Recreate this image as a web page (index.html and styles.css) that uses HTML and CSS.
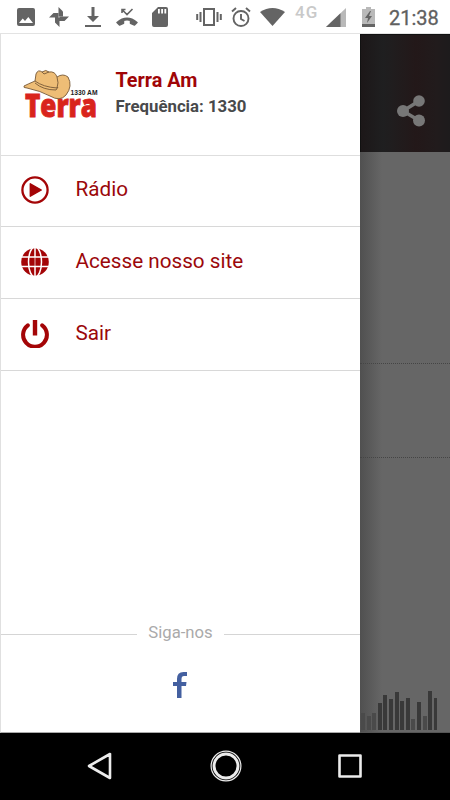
FILE: index.html
```html
<!DOCTYPE html>
<html lang="pt-BR">
<head>
<meta charset="utf-8">
<meta name="viewport" content="width=device-width, initial-scale=1">
<title>Terra Am</title>
<link rel="stylesheet" href="styles.css">
</head>
<body>
<div class="phone">
  <header class="status">
    <svg class="st-image" width="18" height="18" viewBox="0 0 18 18"><path fill-rule="evenodd" d="M2 0h14q2 0 2 2v14q0 2-2 2H2q-2 0-2-2V2q0-2 2-2zM2 15h14l-4.700-6-3.300 4-2.300-2.500z"/></svg>
    <svg class="st-fan" width="20" height="20" viewBox="0 0 20 20"><path d="M9.500 9.500V0L14 4.500V9.500z"/><path d="M10.500 9.500H20L15.500 14h-5zM10.500 10.500V20L6 15.500v-5zM9.500 10.500H0L4.500 6h5z"/></svg>
    <svg class="st-down" width="16" height="20" viewBox="0 0 16 20"><path d="M6.500 0h3v9H14l-6 6-6-6h4.500zM0 18h16v2H0z"/></svg>
    <svg class="st-missed" width="22" height="18" viewBox="0 0 22 18"><path d="M1 14.500Q11 6 21 14.500l-2.500 2.500-4-1.800v-2.800q-3.500-1.200-7 0v2.800l-4 1.800z" stroke="#646464" stroke-width="1.500" stroke-linejoin="round"/><path class="line" d="M6 5V1.500h3.500M6 1.500l5 5L16.500 1" stroke-width="1.600"/></svg>
    <svg class="st-sd" width="16" height="20" viewBox="0 0 16 20"><path fill-rule="evenodd" d="M6 0h8q2 0 2 2v16q0 2-2 2H2q-2 0-2-2V6zM6 2v4.500h1.800V2zM9.200 2v4.500h1.800V2zM12.400 2v4.500h1.800V2z"/></svg>
    <svg class="st-vibrate" width="26" height="18" viewBox="0 0 26 18"><path class="line" d="M8 1h10v16H8zM4.500 4v10M1.200 6v6M21.500 4v10M24.800 6v6" stroke-width="2"/></svg>
    <svg class="st-alarm" width="20" height="20" viewBox="0 0 20 20"><g class="line" stroke-width="1.900"><circle cx="10" cy="11.500" r="7.500"/><path d="M10 7v5l3.500 2M1 4.500L5 1M19 4.500L15 1"/></g></svg>
    <svg class="st-wifi" width="25" height="18" viewBox="0 0 25 18"><path d="M0 4Q12.500-4 25 4L12.500 18z"/></svg>
    <span class="network">4G</span>
    <svg class="st-signal" width="20" height="19" viewBox="0 0 20 19"><path d="M0 19L20 0v19z" fill="#b9b9b9"/><path d="M0 19L14.500 5.200V19z"/></svg>
    <svg class="st-battery" width="13" height="20" viewBox="0 0 13 20"><path d="M4 0h5v2h4v18H0V2h4z" fill="#b9b9b9"/><path d="M0 17h13v3H0zM8 4L3 11h3l-1 5 5-7H7l2-5z"/></svg>
    <time>21:38</time>
  </header>

  <main class="screen">
    <aside class="drawer">
      <section class="station">
        <svg class="logo" width="76" height="50" viewBox="0 0 76 50" role="img" aria-label="Terra 1330 AM">
          <text class="brand" x="2" y="48" textLength="72" lengthAdjust="spacingAndGlyphs">Terra</text>
          <path d="M1 17Q5 15 12 12L13 5Q15 0 19 3Q23 0 26 3Q32 2 34 8Q40 4 45 8Q50 17 43 26Q37 33 27 27Q18 22 4 19Q0 19 1 17z" fill="#eebd76" stroke="#765837" stroke-width=".9"/>
          <path d="M12 12Q20 18 34 19Q36 14 34 8M12 14Q20 21 33 21L35 18M19 3L21 5L26 3" fill="none" stroke="#765837" stroke-width=".9"/>
          <text class="small" x="47.500" y="26" textLength="27" lengthAdjust="spacingAndGlyphs">1330 AM</text>
        </svg>
        <div class="details"><h1>Terra Am</h1><p>Frequência: 1330</p></div>
      </section>
      <nav class="menu">
        <a class="item"><svg width="28" height="28" viewBox="0 0 28 28"><circle cx="14" cy="14" r="12.600" fill="none" stroke="#a40507" stroke-width="2.300"/><path d="M9.300 7.800L20.300 14 9.300 20.200z" stroke="#a40507" stroke-width="1.400" stroke-linejoin="round"/></svg><span>Rádio</span></a>
        <a class="item"><svg width="28" height="28" viewBox="0 0 28 28"><circle cx="14" cy="14" r="13.800"/><g fill="none" stroke="#fff" stroke-width="1.500"><path d="M0 9h28M0 18.600h28M14 0v9"/><path d="M14 18.600V28"/><ellipse cx="14" cy="14" rx="6.500" ry="15"/></g><path d="M14 9v9.600" stroke="#fff" stroke-width=".7"/></svg><span>Acesse nosso site</span></a>
        <a class="item"><svg width="28" height="28" viewBox="0 0 28 28" fill="none" stroke="#a40507" stroke-width="4" stroke-linecap="round"><path d="M6.800 5.300A11.900 11.900 0 1 0 21.200 5.300"/><path d="M14 0v15.500" stroke-linecap="butt" stroke-width="4.400"/></svg><span>Sair</span></a>
      </nav>
      <footer class="follow">
        <div class="divider"><span>Siga-nos</span></div>
        <svg width="14" height="26" viewBox="0 0 14 26"><path d="M4 26V14H0v-4h4V7Q4 0 10.500 0H14v4h-3Q8.500 4 8.500 7v3H13.500l-.5 4H8.500v12z" fill="#4460a0"/></svg>
      </footer>
    </aside>
    <section class="backdrop">
      <div class="toolbar"><svg width="28" height="32" viewBox="0 0 28 32"><path d="M22 6L6 16l16 9.500" fill="none" stroke="#777" stroke-width="3.500"/><g fill="#777"><circle cx="22" cy="6" r="5.800"/><circle cx="6" cy="16" r="6"/><circle cx="22" cy="25.500" r="6"/></g></svg></div>
      <div class="content"><div class="panel first"></div><div class="panel second"></div>
        <div class="bars"><i class="h17 dim"></i><i class="h14 dim"></i><i class="h17 dim"></i><i class="h27"></i><i class="h35"></i><i class="h31"></i><i class="h38"></i><i class="h29"></i><i class="h32"></i><i class="h11 dim"></i><i class="h28"></i><i class="h14 dim"></i><i class="h39"></i><i class="h32 last"></i></div>
      </div>
    </section>
  </main>

  <nav class="system">
    <svg width="26" height="28" viewBox="0 0 26 28"><path d="M2 14L23 2v24z" stroke-width="2.600"/></svg>
    <svg width="32" height="32" viewBox="0 0 32 32"><circle cx="16" cy="16" r="14.900" stroke-width="1.200"/><circle cx="16" cy="16" r="12" stroke-width="2.900"/></svg>
    <svg width="24" height="24" viewBox="0 0 24 24"><rect x="1.500" y="1.500" width="21" height="21" stroke-width="2.600"/></svg>
  </nav>
</div>
</body>
</html>
```

FILE: styles.css
```css
* { box-sizing: border-box; }
body { margin: 0; font-family: Roboto, sans-serif; background: #fff; }
.phone { width: 450px; height: 800px; display: grid; grid-template-rows: 34px 699px 67px; overflow: hidden; }
svg { display: block; flex: none; }

.status { display: flex; align-items: flex-start; padding: 7px 0 0 17px; border-bottom: 1px solid #e3e3e3; fill: #646464; }
.status .line { fill: none; stroke: #646464; }
.st-image { margin-top: 1px; }
.st-fan { margin-left: 14px; }
.st-down { margin-left: 16px; }
.st-missed { margin: 1px 0 0 15px; }
.st-sd { margin-left: 14px; }
.st-vibrate { margin: 1px 0 0 28px; }
.st-alarm { margin-left: 9px; }
.st-wifi { margin: 1px 0 0 9px; }
.network { width: 24px; margin: -5px 0 0 10px; font-size: 17px; line-height: 20px; font-weight: 500; color: #c9c9c9; letter-spacing: 1px; }
.st-signal { margin: 1px 0 0 7px; }
.st-battery { margin-left: 16px; }
.status time { margin: -1px 0 0 14px; font-size: 20px; line-height: 24px; font-weight: 400; color: #606060; -webkit-text-stroke: .3px #606060; }

.screen { display: grid; grid-template-columns: 360px 90px; min-height: 0; }
.drawer { display: flex; flex-direction: column; background: #fff; border-left: 1px solid #e0e0e0; border-bottom: 1px solid #aaa; }
.station { height: 122px; display: flex; padding: 35px 0 0 22px; border-bottom: 1px solid #dedede; }
.logo { overflow: visible; font-family: "Open Sans", sans-serif; font-weight: 800; }
.brand { fill: #d9241c; stroke: #d9241c; stroke-width: .9; font-size: 32px; }
.small { font-family: "Liberation Sans", sans-serif; font-size: 8px; font-weight: 700; fill: #222; }
.details { margin-left: 16.5px; }
h1 { margin: 0; font-size: 19.8px; line-height: 24px; font-weight: 700; color: #a00507; }
.details p { margin: 3px 0 0; font-size: 16.8px; line-height: 20px; font-weight: 700; color: #48494b; white-space: nowrap; }
.menu { margin-top: -.5px; }
.item { height: 71.8px; display: flex; align-items: center; gap: 26.5px; padding: 0 0 1px 20px; border-bottom: 1px solid #d8d8d8; color: #9b080b; fill: #a40507; font-size: 20.7px; }
.item span { transform: translateY(-1px); }
.follow { margin-top: auto; height: 110px; display: flex; flex-direction: column; align-items: center; }
.divider { width: 100%; display: flex; align-items: center; gap: 11px; height: 20px; color: #aaa; font-size: 16.7px; margin-bottom: 30px; }
.divider::before, .divider::after { content: ""; flex: 1; height: 1px; background: #d5d5d5; position: relative; top: 2px; }
.follow > svg { margin-right: 1px; }

.backdrop { display: flex; flex-direction: column; background: linear-gradient(90deg, #505050, #666 22px); }
.toolbar { height: 118px; display: flex; padding: 60px 0 0 36px; background: linear-gradient(90deg, #1c1718, #1f1f20 25%, #231819 62%, #211b1c 85%, #1d1b1c); border-left: 1px solid #111; border-top: 1px solid #111; }
.content { flex: 1; display: flex; flex-direction: column; }
.panel { border-bottom: 1px dotted #454545; }
.first { height: 212px; }
.second { height: 94px; }
.bars { margin-top: auto; height: 43px; display: flex; align-items: flex-end; gap: 1.6px; padding: 0 0 2px 1px; border-bottom: 1px solid #555; }
.bars i { width: 4px; background: #393939; }
.bars .dim { background: #4a4a4a; }
.bars .last { width: 3px; }
.h11 { height: 11px; } .h14 { height: 14px; } .h17 { height: 17px; }
.h27 { height: 27px; } .h28 { height: 28px; } .h29 { height: 29px; }
.h31 { height: 31px; } .h32 { height: 32px; } .h35 { height: 35px; }
.h38 { height: 38px; } .h39 { height: 39px; }

.system { display: flex; align-items: center; justify-content: space-between; padding: 0 88px 1px 87px; background: #000; fill: none; stroke: #ececec; stroke-linejoin: round; }
```
